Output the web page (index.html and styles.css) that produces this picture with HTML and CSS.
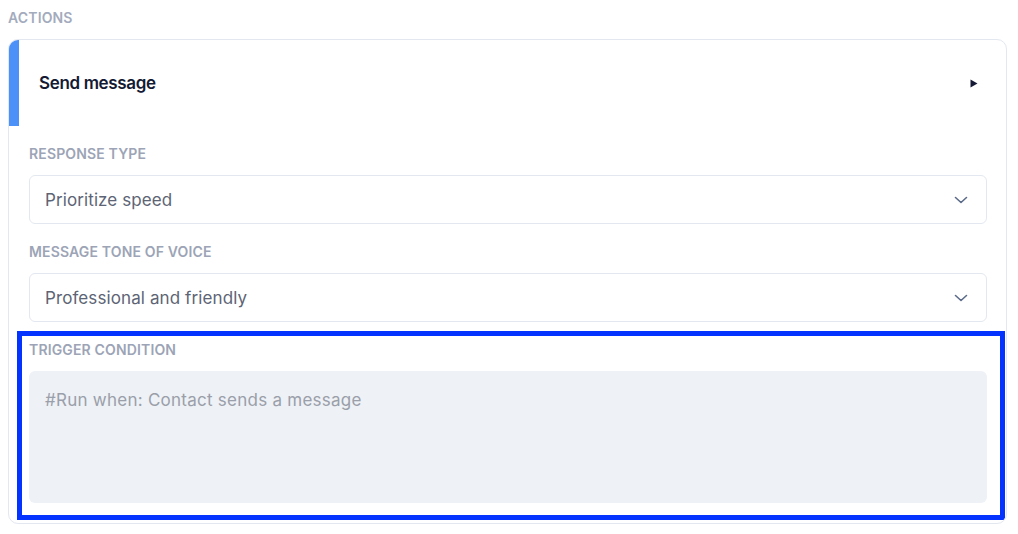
FILE: index.html
```html
<!DOCTYPE html>
<html lang="en">
<head>
<meta charset="utf-8">
<title>Actions</title>
<link rel="stylesheet" href="styles.css">
</head>
<body>
<div class="page">
  <div class="section-label">ACTIONS</div>
  <div class="card">
    <div class="card-header">
      <span class="card-title">Send message</span>
      <svg class="caret" width="8" height="9" viewBox="0 0 8 9"><path d="M0.5 0.5 L7.5 4.5 L0.5 8.5 Z" fill="#141a33"/></svg>
    </div>
    <div class="card-body">
      <div class="field">
        <div class="field-label">RESPONSE TYPE</div>
        <div class="select">
          <span>Prioritize speed</span>
          <svg width="14" height="8" viewBox="0 0 14 8"><path d="M1.5 1.5 L7 6.5 L12.5 1.5" fill="none" stroke="#5b6b88" stroke-width="1.6" stroke-linecap="round" stroke-linejoin="round"/></svg>
        </div>
      </div>
      <div class="field">
        <div class="field-label">MESSAGE TONE OF VOICE</div>
        <div class="select">
          <span>Professional and friendly</span>
          <svg width="14" height="8" viewBox="0 0 14 8"><path d="M1.5 1.5 L7 6.5 L12.5 1.5" fill="none" stroke="#5b6b88" stroke-width="1.6" stroke-linecap="round" stroke-linejoin="round"/></svg>
        </div>
      </div>
      <div class="field highlighted">
        <div class="field-label">TRIGGER CONDITION</div>
        <div class="textarea">#Run when: Contact sends a message</div>
        <div class="highlight-box"></div>
      </div>
    </div>
  </div>
</div>
</body>
</html>
```

FILE: styles.css
```css
* { box-sizing: border-box; }
html, body { margin: 0; padding: 0; background: #ffffff; }
body {
  font-family: Inter, "Noto Sans", "Liberation Sans", sans-serif;
  padding: 8px;
}
.page { width: 999px; }
.section-label {
  font-size: 14px;
  line-height: 20px;
  font-weight: 600;
  color: #a3abbd;
  letter-spacing: 0.15px;
}
.card {
  margin-top: 11px;
  border: 1px solid #e3e7ef;
  border-radius: 10px;
  overflow: hidden;
  background: #fff;
}
.card-header {
  height: 86px;
  border-left: 10px solid #4b91f7;
  padding: 0 28px 0 20px;
  display: flex;
  align-items: center;
  justify-content: space-between;
}
.card-title {
  font-size: 17px;
  font-weight: 600;
  color: #141a33;
  letter-spacing: -0.35px;
}
.caret { display: block; }
.card-body {
  padding: 0 19px 20px 20px;
}
.field { margin-top: 18px; position: relative; }
.field-label {
  font-size: 14px;
  line-height: 20px;
  font-weight: 600;
  color: #9ca4b6;
  letter-spacing: 0.15px;
  margin-bottom: 11px;
}
.select {
  height: 49px;
  border: 1px solid #e3e7ef;
  border-radius: 6px;
  padding: 0 18px 0 15px;
  display: flex;
  align-items: center;
  justify-content: space-between;
  font-size: 17px;
  color: #5d6475;
  letter-spacing: 0.1px;
}
.textarea {
  height: 132px;
  background: #eef1f6;
  border-radius: 6px;
  padding: 17px 16px;
  font-size: 17px;
  line-height: 24px;
  color: #9a9fa9;
  letter-spacing: 0.25px;
}
.highlight-box {
  position: absolute;
  left: -12px;
  top: -9px;
  right: -18px;
  bottom: -17px;
  border: 5px solid #0433ff;
  pointer-events: none;
}
```
